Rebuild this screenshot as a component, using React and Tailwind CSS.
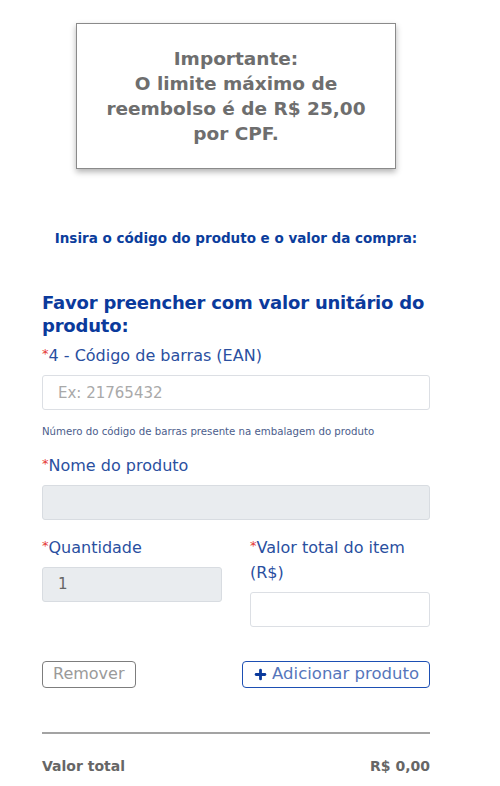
import { Plus } from 'lucide-react'

const font = { fontFamily: '"DejaVu Sans", "Noto Sans", sans-serif' }

function Label({ children }) {
  return (
    <label className="block text-[16px] leading-[25px] text-[#2a4f9f]">
      <span className="text-[#e53935] text-[13px] leading-none relative -top-[3px]">*</span>
      {children}
    </label>
  )
}

export default function App() {
  return (
    <div className="w-[472px] bg-white" style={font}>
      {/* Aviso */}
      <div className="pt-[23px] flex justify-center">
        <div className="w-[320px] h-[146px] border border-[#8a8a8a] shadow-[0_3px_6px_rgba(0,0,0,0.3)] flex items-center justify-center text-center">
          <p className="text-[18.5px] leading-[25px] font-bold text-[#6e6e6e] px-6">
            Importante:
            <br />
            O limite máximo de reembolso é de R$ 25,00 por CPF.
          </p>
        </div>
      </div>

      <p className="mt-[59px] text-center text-[13.5px] font-bold text-[#0b3d9c]">
        Insira o código do produto e o valor da compra:
      </p>

      <div className="px-[42px] mt-[43px]">
        <h2 className="text-[18px] leading-[23px] font-extrabold tracking-[-0.2px] text-[#0b3a9c]">
          Favor preencher com valor unitário do produto:
        </h2>

        <div className="mt-[6px]">
          <Label>4 - Código de barras (EAN)</Label>
          <input
            className="mt-[7px] w-full h-[35px] rounded-[3px] border border-[#dcdfe4] px-[15px] text-[15px] placeholder:text-[#a9a9a9] outline-none"
            placeholder="Ex: 21765432"
          />
          <p className="mt-[14px] text-[10.2px] text-[#4b5d8c]">
            Número do código de barras presente na embalagem do produto
          </p>
        </div>

        <div className="mt-[13px]">
          <Label>Nome do produto</Label>
          <div className="mt-[7px] w-full h-[35px] rounded-[3px] border border-[#d8dce1] bg-[#e9ecef]" />
        </div>

        <div className="mt-[15px] grid grid-cols-2 gap-[28px] items-start">
          <div>
            <Label>Quantidade</Label>
            <div className="mt-[7px] h-[35px] rounded-[3px] border border-[#d8dce1] bg-[#e9ecef] px-[15px] flex items-center text-[15px] text-[#666]">
              1
            </div>
          </div>
          <div>
            <Label>Valor total do item (R$)</Label>
            <input className="mt-[7px] w-full h-[35px] rounded-[3px] border border-[#dcdfe4] px-[15px] text-[15px] outline-none" />
          </div>
        </div>

        <div className="mt-[34px] flex justify-between">
          <button className="h-[27px] px-[10px] rounded-[4px] border border-[#7d7d7d] text-[16px] text-[#9a9a9a]">
            Remover
          </button>
          <button className="h-[27px] px-[10px] rounded-[4px] border border-[#1d4fb3] text-[16.5px] text-[#5676bb] flex items-center gap-[4px]">
            <Plus className="w-[15px] h-[15px] text-[#0b3a9c]" strokeWidth={4.5} />
            Adicionar produto
          </button>
        </div>

        <hr className="mt-[44px] border-0 h-[2px] bg-[#a3a3a3]" />

        <div className="mt-[22px] flex justify-between text-[14px] font-bold text-[#666]">
          <span>Valor total</span>
          <span>R$ 0,00</span>
        </div>
      </div>
    </div>
  )
}
